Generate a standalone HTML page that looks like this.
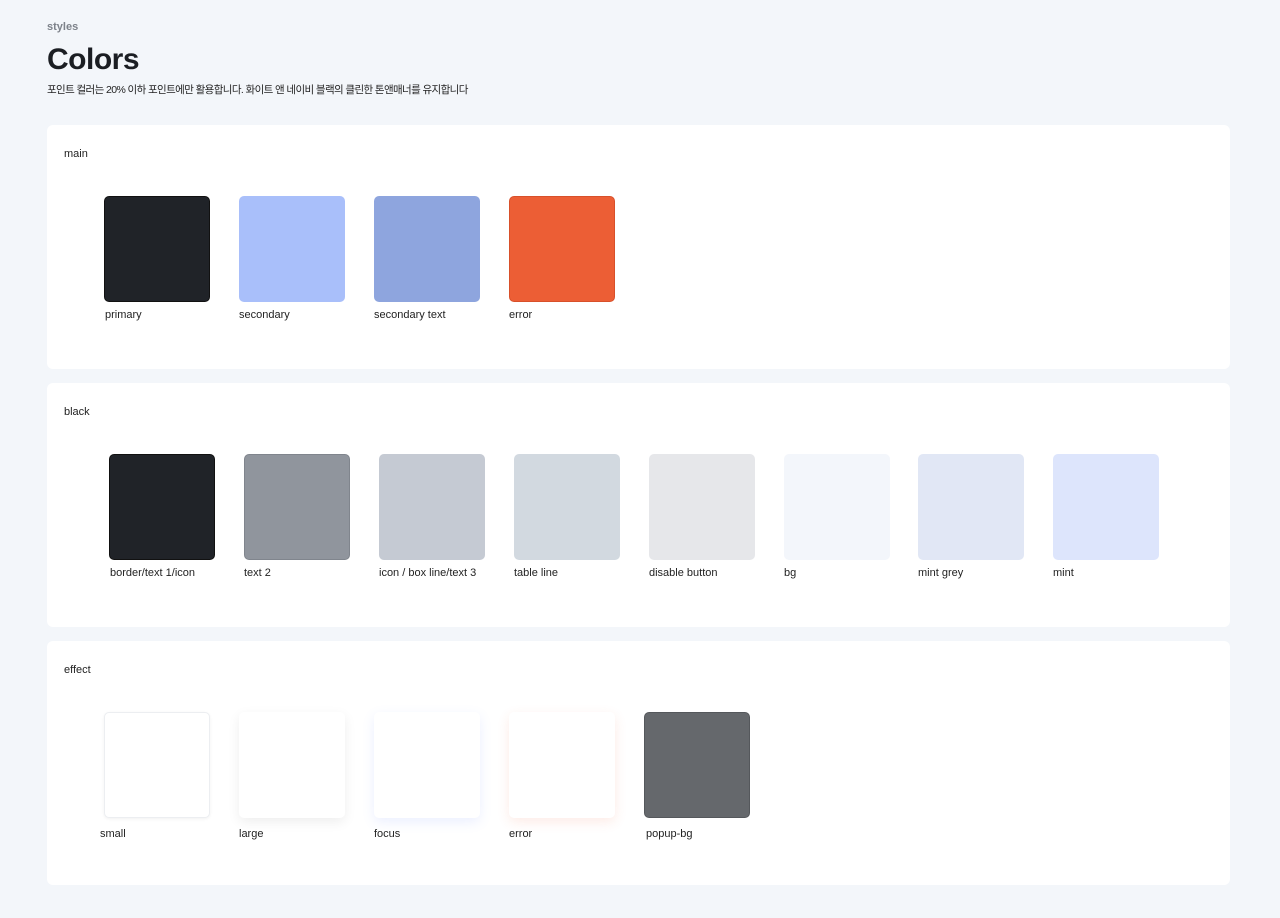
<!DOCTYPE html>
<html><head><meta charset="utf-8"><style>
*{margin:0;padding:0;box-sizing:border-box}
body{width:1280px;height:918px;background:#f3f6fa;font-family:"Liberation Sans","Noto Sans CJK KR",sans-serif;position:relative;overflow:hidden;color:#111}
.a{position:absolute}
.card{position:absolute;left:47px;width:1183px;height:244px;background:#fff;border-radius:6px}
.t{position:absolute;left:17px;top:23px;font-size:11px;color:#222}
.sw{position:absolute;width:106px;height:106px;border-radius:5px}
.lb{position:absolute;font-size:11px;color:#222;white-space:nowrap}
</style></head><body>
<div class="a" style="left:47px;top:21px;font-size:11px;font-weight:bold;color:#7d828a">styles</div>
<div class="a" style="left:47px;top:43px;font-size:30px;font-weight:bold;color:#1b1e23;letter-spacing:-0.5px">Colors</div>
<div class="a" style="left:47px;top:82px;font-size:10.5px;color:#222;letter-spacing:-0.6px">포인트 컬러는 20% 이하 포인트에만 활용합니다. 화이트 앤 네이비 블랙의 클린한 톤앤매너를 유지합니다</div>

<div class="card" style="top:125px"><div class="t">main</div>
<div class="sw" style="left:57px;top:71px;background:#202328;border:1px solid #111"></div><div class="lb" style="left:58px;top:184px">primary</div>
<div class="sw" style="left:192px;top:71px;background:#a9bffa"></div><div class="lb" style="left:192px;top:184px">secondary</div>
<div class="sw" style="left:327px;top:71px;background:#8ea5de"></div><div class="lb" style="left:327px;top:184px">secondary text</div>
<div class="sw" style="left:462px;top:71px;background:#ec5e35;border:1px solid #d8502a"></div><div class="lb" style="left:462px;top:184px">error</div>
</div>

<div class="card" style="top:383px"><div class="t">black</div>
<div class="sw" style="left:62px;top:71px;background:#202328;border:1px solid #111"></div><div class="lb" style="left:63px;top:184px">border/text 1/icon</div>
<div class="sw" style="left:197px;top:71px;background:#90959d;border:1px solid #80858d"></div><div class="lb" style="left:197px;top:184px">text 2</div>
<div class="sw" style="left:332px;top:71px;background:#c5cad3"></div><div class="lb" style="left:332px;top:184px">icon / box line/text 3</div>
<div class="sw" style="left:467px;top:71px;background:#d2d9e0"></div><div class="lb" style="left:467px;top:184px">table line</div>
<div class="sw" style="left:602px;top:71px;background:#e6e7ea"></div><div class="lb" style="left:602px;top:184px">disable button</div>
<div class="sw" style="left:737px;top:71px;background:#f3f6fb"></div><div class="lb" style="left:737px;top:184px">bg</div>
<div class="sw" style="left:871px;top:71px;background:#e1e7f5"></div><div class="lb" style="left:871px;top:184px">mint grey</div>
<div class="sw" style="left:1006px;top:71px;background:#dde5fc"></div><div class="lb" style="left:1006px;top:184px">mint</div>
</div>

<div class="card" style="top:641px"><div class="t">effect</div>
<div class="sw" style="left:57px;top:71px;background:#fff;border:1px solid #eceef1;box-shadow:0 1px 3px rgba(0,0,0,.06)"></div><div class="lb" style="left:53px;top:187px">small</div>
<div class="sw" style="left:192px;top:71px;background:#fff;box-shadow:0 4px 12px rgba(0,0,0,.07)"></div><div class="lb" style="left:192px;top:187px">large</div>
<div class="sw" style="left:327px;top:71px;background:#fff;box-shadow:0 4px 12px rgba(90,120,255,.12)"></div><div class="lb" style="left:327px;top:187px">focus</div>
<div class="sw" style="left:462px;top:71px;background:#fff;box-shadow:0 4px 12px rgba(236,94,53,.12)"></div><div class="lb" style="left:462px;top:187px">error</div>
<div class="sw" style="left:597px;top:71px;background:#65686c;border:1px solid #55585c"></div><div class="lb" style="left:599px;top:187px">popup-bg</div>
</div>
</body></html>
